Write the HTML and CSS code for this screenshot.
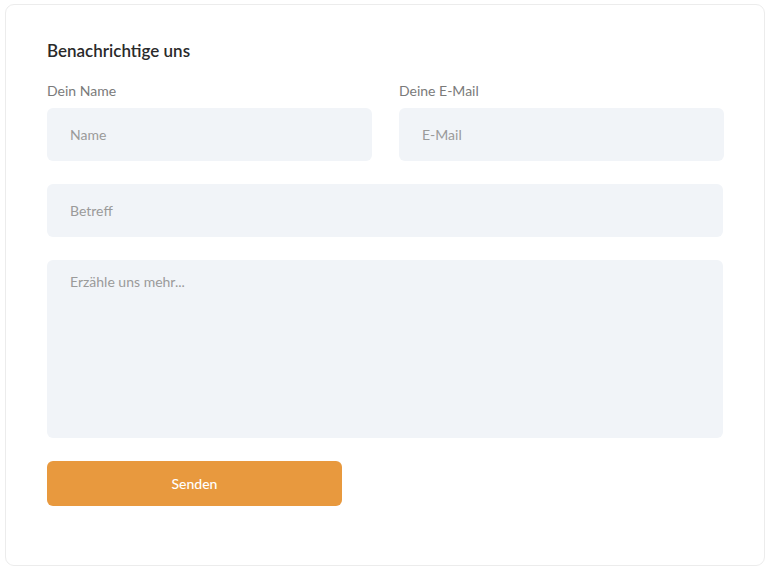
FILE: index.html
```html
<!DOCTYPE html>
<html lang="de">
<head>
<meta charset="utf-8">
<title>Benachrichtige uns</title>
<link rel="stylesheet" href="styles.css">
</head>
<body>
<div class="card">
  <h2 class="title">Benachrichtige uns</h2>
  <div class="row two">
    <div class="field">
      <label class="label">Dein Name</label>
      <div class="input">Name</div>
    </div>
    <div class="field">
      <label class="label">Deine E-Mail</label>
      <div class="input">E-Mail</div>
    </div>
  </div>
  <div class="row">
    <div class="input">Betreff</div>
  </div>
  <div class="row">
    <div class="input area">Erzähle uns mehr...</div>
  </div>
  <button class="btn">Senden</button>
</div>
</body>
</html>
```
FILE: styles.css
```css
* { box-sizing: border-box; }
html, body { margin: 0; padding: 0; background: #fff; }
body {
  font-family: Lato, "Open Sans", sans-serif;
  padding: 4px 4px 0 5px;
}
.card {
  width: 760px;
  height: 562px;
  border: 1px solid #ececec;
  border-radius: 9px;
  padding: 36px 41px 0 41px;
}
.title {
  margin: 0 0 21px;
  font-size: 17px;
  line-height: 20px;
  font-weight: 600;
  color: #2a2a2a;
}
.row { margin-bottom: 23px; }
.row.two {
  display: grid;
  grid-template-columns: 325px 325px;
  column-gap: 27px;
}
.field { display: flex; flex-direction: column; }
.label {
  font-size: 14px;
  line-height: 18px;
  color: #7a7a7a;
  margin-bottom: 8px;
}
.input {
  height: 53px;
  background: #f1f4f8;
  border-radius: 6px;
  padding: 0 23px;
  display: flex;
  align-items: center;
  font-size: 14px;
  color: #9a9a9a;
}
.input.area {
  height: 178px;
  align-items: flex-start;
  padding-top: 13px;
}
.btn {
  display: block;
  width: 295px;
  height: 45px;
  border: 0;
  border-radius: 6px;
  background: #e8993e;
  color: #fff;
  font-family: inherit;
  font-size: 14px;
  font-weight: 500;
}
```
